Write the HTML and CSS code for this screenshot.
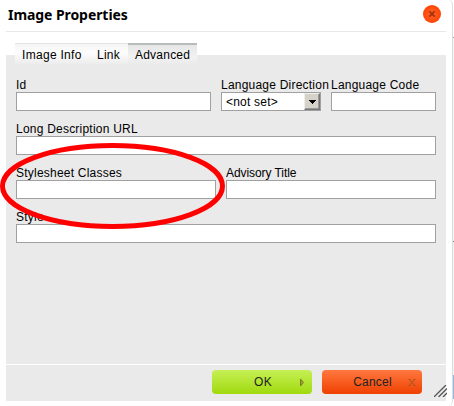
FILE: index.html
```html
<!DOCTYPE html>
<html lang="en">
<head>
<meta charset="utf-8">
<title>Image Properties</title>
<link rel="stylesheet" href="styles.css">
</head>
<body>
<div class="page-edge"></div>
<main class="dialog">
  <header class="titlebar">
    <h1>Image Properties</h1>
    <button class="close" aria-label="Close"><svg width="18" height="18" viewBox="0 0 18 18"><path d="M6.300 6.200l5.400 5.400M11.700 6.200l-5.400 5.400" stroke="#9b2f10" stroke-width="1.600"/></svg></button>
  </header>
  <nav class="tabs">
    <a class="tab info">Image Info</a><a class="tab link">Link</a><a class="tab advanced">Advanced</a>
  </nav>
  <section class="panel">
    <div class="row top">
      <label><span>Id</span><input type="text"></label>
      <label><span>Language Direction</span><span class="select"><span class="value">&lt;not set&gt;</span><span class="arrow"><svg width="7" height="4" viewBox="0 0 7 4" shape-rendering="crispEdges"><path d="M0 0h7v1H6v1H5v1H4v1H3V3H2V2H1V1H0z"/></svg></span></span></label>
      <label><span>Language Code</span><input type="text"></label>
    </div>
    <div class="row"><label><span>Long Description URL</span><input type="text"></label></div>
    <div class="row half">
      <label><span>Stylesheet Classes</span><input type="text"></label>
      <label class="advisory"><span>Advisory Title</span><input type="text"></label>
    </div>
    <div class="row"><label><span>Style</span><input type="text"></label></div>
  </section>
  <footer class="footer">
    <button class="btn ok"><span>OK</span><svg width="6" height="9" viewBox="0 0 6 9"><path d="M1.500 1v7L4.500 4.500z" fill="#9fa03b" stroke="#7b7c20"/></svg></button>
    <button class="btn cancel"><span>Cancel</span><svg width="8" height="8" viewBox="0 0 8 8"><path d="M.5 1.500h2M5.500 1.500h2M.5 7.500h2M5.500 7.500h2M1.500 1.500l5 6M6.500 1.500l-5 6" fill="none" stroke="#a8541c"/></svg></button>
    <svg class="grip" width="13" height="12" viewBox="0 0 13 12"><path d="M0 12L12 0M4.500 12L13 3.500M9 12l4-4" stroke="#555" stroke-width="1.300"/></svg>
  </footer>
</main>
<svg class="highlight" width="226" height="88" viewBox="0 0 226 88"><ellipse cx="112.500" cy="44" rx="110" ry="40.500" fill="none" stroke="#f00" stroke-width="5"/></svg>
</body>
</html>
```
FILE: styles.css
```css
* { box-sizing: border-box; }
body {
  margin: 0;
  width: 454px;
  height: 406px;
  overflow: hidden;
  background: #fff;
  color: #000;
  font: 12px/14px "Liberation Sans", Arial, sans-serif;
  letter-spacing: .22px;
}
button { padding: 0; border: 0; font: inherit; letter-spacing: inherit; }
.dialog {
  width: 453px;
  height: 406px;
  padding: 0 6px;
  border-right: 1px solid #ddd;
  border-radius: 0 5px 5px 0;
}
.page-edge {
  position: absolute;
  right: 0;
  top: 0;
  width: 1px;
  height: 406px;
  background: linear-gradient(#fff 37px, #999 37px 38px, #f3f4f6 38px 241px, #777 241px 242px, #f3f4f6 242px 375px, #8bb7e8 375px 399px, #fff 399px);
}
.titlebar {
  display: flex;
  align-items: center;
  justify-content: space-between;
  height: 32px;
  padding: 0 5px 4px 2px;
  border-bottom: 1px solid #e8e8e8;
}
h1 {
  margin: 2px 0 0;
  font: bold 14px/18px "Noto Sans", sans-serif;
  letter-spacing: -.07px;
}
.close {
  width: 18px;
  height: 18px;
  border-radius: 50%;
  background: radial-gradient(circle at 50% 50%, #ff6324, #ff4a0c 60%, #fb2500);
}
.close svg { display: block; }
.tabs {
  display: flex;
  position: relative;
  height: 21px;
  margin: 11px 0 -9px 9px;
}
.tab {
  height: 21px;
  padding: 4px 0 0 7px;
  border-top: 1px solid #e4e4e4;
  background: linear-gradient(#f5f5f5, #fcfcfc 45%, #ececec);
}
.info { width: 75px; letter-spacing: .3px; }
.link { width: 38px; }
.advanced {
  width: 69px;
  padding-top: 3px;
  border-top: 2px solid #b9bcbc;
  background: linear-gradient(#e5e6e6, #f2f2f2 60%, #ebebeb);
}
.panel {
  height: 309px;
  padding: 23px 10px 0;
  background: #eaeaea;
}
.row { display: grid; height: 44px; }
.top { grid-template-columns: 195px 100px 105px; column-gap: 10px; }
.half { grid-template-columns: 200px 210px; column-gap: 10px; }
label { display: block; white-space: nowrap; min-width: 0; }
label > span:first-child { display: block; height: 14px; }
.advisory { letter-spacing: -.07px; }
input, .select {
  display: flex;
  width: 100%;
  height: 19px;
  border: 1px solid #a0a0a0;
  border-radius: 0;
  background: #fff;
}
.value { flex: 1; padding: 2px 0 0 4px; }
.arrow {
  display: grid;
  place-items: center;
  width: 16px;
  height: 17px;
  border: 1px solid;
  border-color: #eee #777 #777 #eee;
  box-shadow: inset -1px -1px #999;
  background: #d5d2ca;
}
.footer {
  display: flex;
  align-items: flex-start;
  height: 36px;
  margin-top: 1px;
  padding: 5px 0 0 206px;
  background: #eaeaea;
}
.btn {
  display: flex;
  flex: none;
  align-items: center;
  width: 100px;
  height: 24px;
  padding-right: 7px;
  border-radius: 4px;
  color: #222;
}
.btn span { flex: 1; text-align: center; }
.ok { margin-right: 10px; background: linear-gradient(#c6ef55, #a0da0e); }
.ok span { padding-left: 15px; }
.cancel { padding-right: 6px; background: linear-gradient(#ff7840, #ef4000); }
.cancel span { padding-left: 15px; }
.grip { flex: none; margin: 15px 0 0 12px; }
.highlight { position: absolute; left: 0; top: 142px; }
```
